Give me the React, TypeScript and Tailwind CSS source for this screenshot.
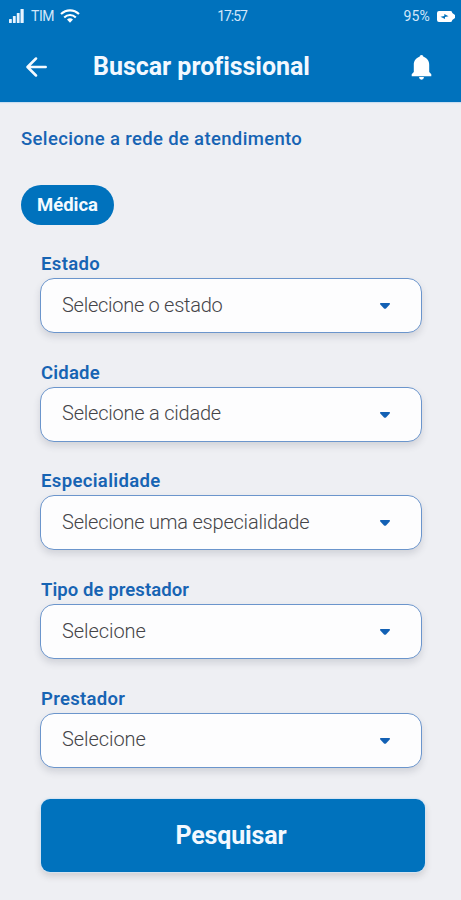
const fields = [
  { label: 'Estado', text: 'Selecione o estado', l: 'tracking-[0.35px]', t: 'tracking-[-0.27px]' },
  { label: 'Cidade', text: 'Selecione a cidade', l: 'tracking-[0.2px]', t: 'tracking-[-0.22px]' },
  { label: 'Especialidade', text: 'Selecione uma especialidade', l: 'tracking-[0.35px]', t: 'tracking-[-0.22px]' },
  { label: 'Tipo de prestador', text: 'Selecione', l: 'tracking-[0.08px]', t: 'tracking-[-0.07px]' },
  { label: 'Prestador', text: 'Selecione', l: 'tracking-[0.3px]', t: 'tracking-[-0.07px]' },
];

function StatusBar() {
  return (
    <div className="flex h-8 items-center pl-[9px] pr-[6px] text-[14px] leading-none text-[#d3e7fa]">
      <div className="flex flex-1 items-center">
        <svg width="15" height="14" viewBox="0 0 15 14" fill="#e9f4ff">
          <rect x="0" y="10" width="2.8" height="4" rx=".5" />
          <rect x="3.9" y="7" width="2.8" height="7" rx=".5" />
          <rect x="7.8" y="4" width="2.8" height="10" rx=".5" />
          <rect x="11.5" y="0" width="3.2" height="14" rx=".5" />
        </svg>
        <span className="ml-[7px] tracking-[-0.4px]">TIM</span>
        <svg className="ml-[6px]" width="20" height="14" viewBox="0 0 20 14" fill="none" stroke="#fff" strokeWidth="2.1">
          <path d="M1 5.1C6.2 .1 13.8 .1 19 5.1" />
          <path d="M4.2 8.4C7.5 5.2 12.5 5.2 15.8 8.4" />
          <path d="M7 10.5Q10 8.2 13 10.5L10 13.7Z" fill="#fff" stroke="none" />
        </svg>
      </div>
      <span className="tracking-[-1.1px]">17:57</span>
      <div className="flex flex-1 items-center justify-end">
        <span className="tracking-[0.2px]">95%</span>
        <svg className="ml-[7px]" width="18" height="11" viewBox="0 0 18 11">
          <path d="M2 0H13.5Q15.3 0 15.3 2L18 4V7L15.3 9Q15.3 11 13.5 11H2Q0 11 0 9V2Q0 0 2 0Z" fill="#fff" />
          <path d="M3.5 5.8L7.3 5V3L11.5 5.2L8 6V8Z" fill="#0072bd" />
        </svg>
      </div>
    </div>
  );
}

export default function App() {
  return (
    <div className="h-[900px] w-full overflow-hidden bg-[#eeeff3] font-['Roboto',sans-serif]">
      <header className="h-[102px] bg-[#0072bd] shadow-[0_1px_1px_#c9def0]">
        <StatusBar />
        <div className="flex h-[70px] items-center pl-[26px] pr-[29px]">
          <svg width="21" height="20" viewBox="0 0 21 20" fill="none" stroke="#f4faff" strokeWidth="2.5" strokeLinecap="round" strokeLinejoin="round">
            <path d="M19.7 10H1.8M10 1.5L1.5 10L10 18.5" />
          </svg>
          <h1 className="ml-[46px] flex-1 whitespace-nowrap text-[25px] font-bold leading-8 tracking-[-0.03px] text-[#f2f8ff]">Buscar profissional</h1>
          <svg width="21" height="25" viewBox="0 0 21 25" fill="#fff">
            <path d="M10.5 0C11.6 0 12.3 .7 12.4 1.8C16 2.8 18.2 6 18.2 9.8V17L20.3 19.3V21.2H.7V19.3L2.8 17V9.8C2.8 6 5 2.8 8.6 1.8C8.7 .7 9.4 0 10.5 0Z" />
            <path d="M8 22H13Q12.8 24.7 10.5 24.7T8 22Z" />
          </svg>
        </div>
      </header>
      <main>
        <h2 className="mt-[25px] pl-[21px] text-[18.5px] font-medium leading-6 tracking-[0.35px] text-[#1764b3]">Selecione a rede de atendimento</h2>
        <button className="ml-[21px] mt-[34px] flex h-[40px] w-[93px] items-center justify-center rounded-full bg-[#0072bd] pt-px text-[18.5px] font-bold text-[#f4faff]">Médica</button>
        <div className="ml-[40px] mt-[28px] flex w-[382px] flex-col">
          {fields.map((f) => (
            <div key={f.label} className="h-[108.7px]">
              <label className={`block h-[25px] whitespace-nowrap pl-px text-[18.5px] font-semibold leading-[23px] text-[#1764b3] ${f.l}`}>{f.label}</label>
              <div className="flex h-[55px] items-center justify-between rounded-[14px] border-[1.5px] border-[#6b95cc] bg-[#fdfdfe] pl-[21px] pr-[31.5px] shadow-[0_4px_7px_rgba(60,70,90,0.16)]">
                <span className={`whitespace-nowrap pb-[2px] text-[20px] font-light text-[#444448] ${f.t}`}>{f.text}</span>
                <svg className="mt-px" width="10" height="6" viewBox="0 0 10 6" fill="#1260b4">
                  <path d="M.5 0H9.5Q10.4 .7 9.5 1.7L6 5.4Q5 6.3 4 5.4L.5 1.7Q-.4 .7 .5 0Z" />
                </svg>
              </div>
            </div>
          ))}
        </div>
        <button className="ml-[41px] mt-[3px] flex h-[73px] w-[384px] items-center justify-center rounded-[9px] bg-[#0072bd] pr-[4px] text-[25px] font-bold tracking-[-0.15px] text-[#f2f8ff] shadow-[0_0_1px_1px_#d5e4f2,0_4px_7px_rgba(60,50,50,0.18)]">Pesquisar</button>
      </main>
    </div>
  );
}
